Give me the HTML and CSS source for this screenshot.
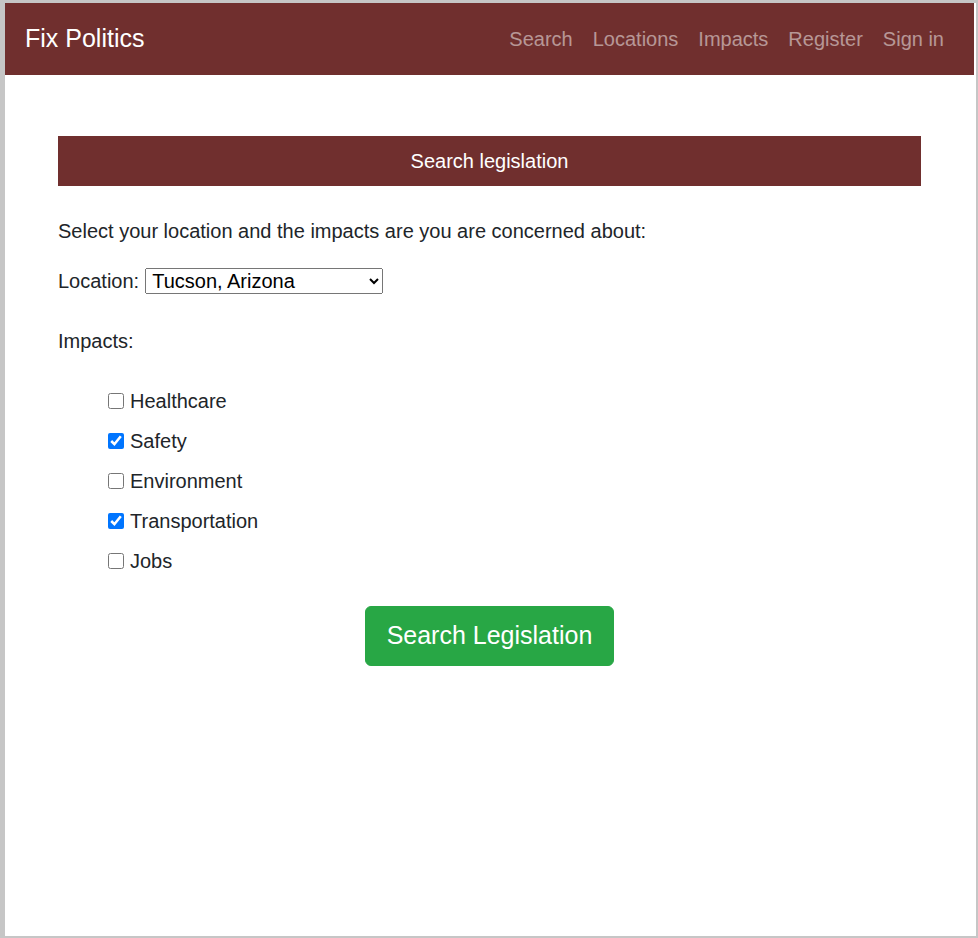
FILE: index.html
```html
<!DOCTYPE html>
<html lang="en">
<head>
<meta charset="utf-8">
<title>Fix Politics</title>
<link rel="stylesheet" href="styles.css">
</head>
<body>
<nav class="navbar">
  <a class="brand" href="#">Fix Politics</a>
  <ul class="nav-links">
    <li><a href="#">Search</a></li>
    <li><a href="#">Locations</a></li>
    <li><a href="#">Impacts</a></li>
    <li><a href="#">Register</a></li>
    <li><a href="#">Sign in</a></li>
  </ul>
</nav>
<main class="main">
  <h1 class="section-bar">Search legislation</h1>
  <form class="search-form">
    <p class="intro">Select your location and the impacts are you are concerned about:</p>
    <div class="location-row">
      <label for="loc">Location:</label>
      <select id="loc" class="location-select">
        <option>Tucson, Arizona</option>
        <option>Phoenix, Arizona</option>
      </select>
    </div>
    <p class="impacts-label">Impacts:</p>
    <ul class="impact-list">
      <li><label class="check"><input type="checkbox"> Healthcare</label></li>
      <li><label class="check"><input type="checkbox" checked> Safety</label></li>
      <li><label class="check"><input type="checkbox"> Environment</label></li>
      <li><label class="check"><input type="checkbox" checked> Transportation</label></li>
      <li><label class="check"><input type="checkbox"> Jobs</label></li>
    </ul>
    <div class="actions">
      <button type="button" class="btn-search">Search Legislation</button>
    </div>
  </form>
</main>
</body>
</html>
```

FILE: styles.css
```css
html {
  background: #c6c6c6;
  height: 100%;
}
body {
  margin: 3px 2px 2px 5px;
  background: #fff;
  height: calc(100% - 5px);
  font-family: "Liberation Sans", Arial, sans-serif;
  font-size: 20px;
  line-height: 1.5;
  color: #212529;
}
.navbar {
  display: flex;
  align-items: center;
  justify-content: space-between;
  background: #702f2e;
  height: 72px;
  padding: 0 20px;
  margin-right: 2px;
  box-sizing: border-box;
}
.brand {
  color: #fff;
  font-size: 25px;
  text-decoration: none;
  line-height: 1.5;
}
.nav-links {
  display: flex;
  list-style: none;
  margin: 0;
  padding: 0;
}
.nav-links a {
  display: block;
  padding: 0 10px;
  color: rgba(255, 255, 255, 0.5);
  text-decoration: none;
  font-size: 20px;
}
.main {
  margin: 0 55px 0 53px;
  padding-top: 61px;
}
.section-bar {
  margin: 0;
  height: 50px;
  background: #702f2e;
  color: #fff;
  font-size: 20px;
  font-weight: normal;
  text-align: center;
  line-height: 50px;
}
.search-form {
  padding-top: 30px;
}
.intro {
  margin: 0 0 20px;
}
.location-row {
  display: flex;
  align-items: center;
  height: 30px;
}
.location-row label {
  margin-right: 6px;
}
.location-select {
  width: 238px;
  height: 26px;
  font-family: "Liberation Sans", Arial, sans-serif;
  font-size: 20px;
  color: #000;
  padding: 0 2px;
}
.impacts-label {
  margin: 30px 0 30px;
}
.impact-list {
  list-style: none;
  margin: 0;
  padding: 0 0 0 50px;
  display: flex;
  flex-direction: column;
  gap: 10px;
}
.check {
  display: flex;
  align-items: center;
  height: 30px;
}
.check input {
  width: 16px;
  height: 16px;
  margin: 0 6px 0 0;
}
.actions {
  display: flex;
  justify-content: center;
  padding-top: 30px;
}
.btn-search {
  background: #28a745;
  color: #fff;
  border: 1px solid #28a745;
  border-radius: 6px;
  font-family: "Liberation Sans", Arial, sans-serif;
  font-size: 25px;
  line-height: 1.5;
  padding: 10px 21px;
  cursor: pointer;
}
```
